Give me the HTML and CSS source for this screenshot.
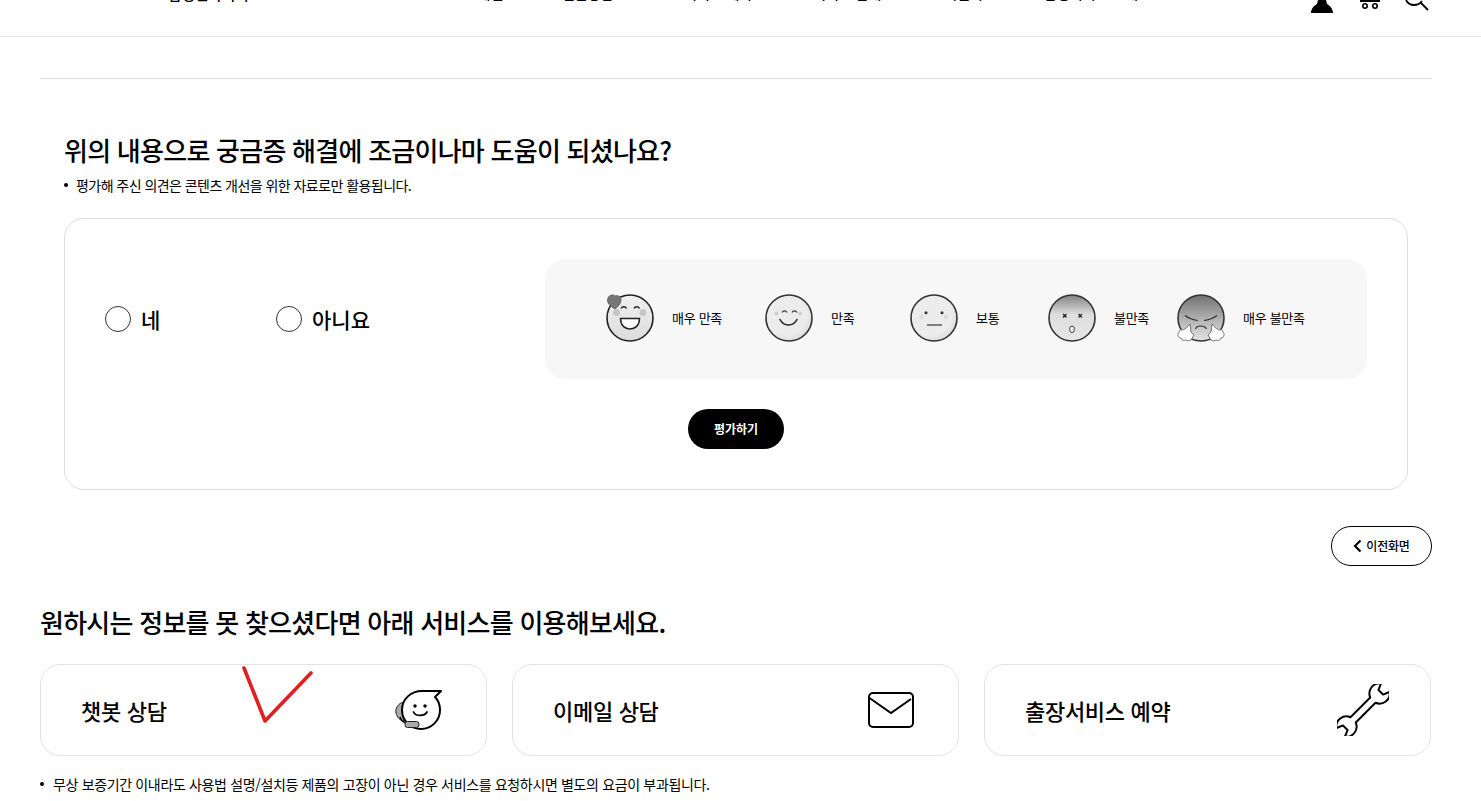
FILE: index.html
```html
<!DOCTYPE html>
<html lang="ko">
<head>
<meta charset="utf-8">
<title>삼성전자서비스</title>
<link rel="stylesheet" href="styles.css">
</head>
<body>
<header class="site-header">
  <div class="brand"><span class="wordmark">SAMSUNG</span><span class="service-name">삼성전자서비스</span></div>
  <nav class="nav">
    <a>스스로 해결</a><a>전문상담</a><a>서비스 예약</a><a>서비스 안내</a><a>고객센터</a><a>삼성서비스 소개</a>
  </nav>
  <div class="header-icons">
    <svg class="hi hi-user" width="22" height="13" viewBox="0 0 22 13"><path d="M0 13c0-5 4-8 6-9L7 0h8l1 4c2 1 6 4 6 9z" fill="#000"/></svg>
    <svg class="hi hi-cart" width="22" height="9" viewBox="0 0 22 9"><path d="M1 1h20" stroke="#000" stroke-width="2"/><circle cx="6" cy="6" r="2.2" fill="none" stroke="#000" stroke-width="1.6"/><circle cx="16" cy="6" r="2.2" fill="none" stroke="#000" stroke-width="1.6"/></svg>
    <svg class="hi hi-search" width="24" height="11" viewBox="0 0 24 11"><path d="M1 0c2 4 5 5 8 5s6-1 8-4M16 3l7 7" fill="none" stroke="#000" stroke-width="1.8"/></svg>
  </div>
</header>

<main class="page">
  <hr class="divider">

  <section class="survey">
    <h2 class="survey-title">위의 내용으로 궁금증 해결에 조금이나마 도움이 되셨나요?</h2>
    <p class="note">평가해 주신 의견은 콘텐츠 개선을 위한 자료로만 활용됩니다.</p>

    <div class="survey-card">
      <div class="survey-row">
        <div class="answers">
          <label class="answer"><span class="radio"></span>네</label>
          <label class="answer"><span class="radio"></span>아니요</label>
        </div>
        <div class="ratings">
          <div class="rating">
            <svg class="face" viewBox="0 0 48 48" width="48" height="48">
              <defs>
                <linearGradient id="g1" x1="0" y1="0" x2="0" y2="1"><stop offset="0" stop-color="#f0f0f0"/><stop offset="1" stop-color="#dcdcdc"/></linearGradient>
              </defs>
              <circle cx="24" cy="24" r="23" fill="url(#g1)" stroke="#222" stroke-width="1.6"/>
              <circle cx="10.500" cy="18.500" r="3.500" fill="#c6c6c6"/><circle cx="37" cy="18.500" r="3.500" fill="#c6c6c6"/>
              <path d="M15 14.500a3 3 0 0 1 5.500 0M28 14.500a3 3 0 0 1 5.500 0" fill="none" stroke="#222" stroke-width="1.500"/>
              <path d="M14.500 24.500h19c0 7-4.500 10.500-9.500 10.500s-9.500-3.500-9.500-10.500z" fill="#fff" stroke="#222" stroke-width="1.500"/>
              <path d="M9 15C4 12 0 8 2 4c1-3 5-4 7-2 2-1 6 0 6 4 0 3-3 7-6 9z" fill="#777" stroke="#555" stroke-width=".8"/>
            </svg>
            <span class="rating-label">매우 만족</span>
          </div>
          <div class="rating">
            <svg class="face" viewBox="0 0 48 48" width="48" height="48">
              <defs>
                <radialGradient id="g2" cx=".42" cy=".42" r=".65"><stop offset=".7" stop-color="#ececec"/><stop offset="1" stop-color="#d8d8d8"/></radialGradient>
              </defs>
              <circle cx="24" cy="24" r="23" fill="url(#g2)" stroke="#333" stroke-width="1.600"/>
              <circle cx="11.500" cy="19.500" r="2" fill="#cdcdcd"/><circle cx="35" cy="19.500" r="2" fill="#cdcdcd"/>
              <path d="M17 18.500a2.800 2.800 0 0 1 5 0M27 18.500a2.800 2.800 0 0 1 5 0" fill="none" stroke="#333" stroke-width="1.200"/>
              <path d="M15 25.500c2 4 5.500 5.500 8.500 5.500s6.500-1.500 8.500-5.500" fill="none" stroke="#222" stroke-width="1.600" stroke-linecap="round"/>
            </svg>
            <span class="rating-label">만족</span>
          </div>
          <div class="rating">
            <svg class="face" viewBox="0 0 48 48" width="48" height="48">
              <circle cx="24" cy="24" r="23" fill="url(#g2)" stroke="#333" stroke-width="1.600"/>
              <circle cx="11.500" cy="23" r="2.200" fill="#dcdcdc"/><circle cx="36" cy="23" r="2.200" fill="#dcdcdc"/>
              <circle cx="16" cy="18.700" r="1.500" fill="#333"/><circle cx="32" cy="18.700" r="1.500" fill="#333"/>
              <path d="M17 31h15" stroke="#333" stroke-width="1.200"/>
            </svg>
            <span class="rating-label">보통</span>
          </div>
          <div class="rating">
            <svg class="face" viewBox="0 0 48 48" width="48" height="48">
              <defs>
                <linearGradient id="g4" x1="0" y1="0" x2="0" y2="1"><stop offset="0" stop-color="#828282"/><stop offset=".42" stop-color="#dedede"/><stop offset="1" stop-color="#e6e6e6"/></linearGradient>
              </defs>
              <circle cx="24" cy="24" r="23" fill="url(#g4)" stroke="#333" stroke-width="1.600"/>
              <path d="M15 20l3.500 3.500M18.500 20L15 23.500M30.500 20l3.500 3.500M34 20l-3.500 3.500" stroke="#222" stroke-width="1.300"/>
              <ellipse cx="24" cy="35.300" rx="2.300" ry="3.300" fill="#fff" stroke="#333" stroke-width="1"/>
            </svg>
            <span class="rating-label">불만족</span>
          </div>
          <div class="rating">
            <svg class="face" viewBox="0 0 48 48" width="48" height="48">
              <defs>
                <linearGradient id="g5" x1="0" y1="0" x2="0" y2="1"><stop offset="0" stop-color="#727272"/><stop offset=".55" stop-color="#b4b4b4"/><stop offset="1" stop-color="#e4e4e4"/></linearGradient>
              </defs>
              <circle cx="24" cy="24" r="23" fill="url(#g5)" stroke="#333" stroke-width="1.600"/>
              <path d="M8 21.500c4 3 9 4.500 13 5M40 21.500c-4 3-9 4.500-13 5" fill="none" stroke="#333" stroke-width="1.200"/>
              <path d="M18.500 35c1-4 9-4 11 0" fill="none" stroke="#333" stroke-width="1.200"/>
              <path d="M13 30l1 8 3 3-3 5c-2 1-4 1-5 0-2 1-5 0-5-2-3 0-4-4-2-6 0-2 3-3 4-2 2-1 4-2 7-6z" fill="#fff" stroke="#555" stroke-width=".8"/>
              <path d="M35 30l-1 8-3 3 3 5c2 1 4 1 5 0 2 1 5 0 5-2 3 0 4-4 2-6 0-2-3-3-4-2-2-1-4-2-7-6z" fill="#fff" stroke="#555" stroke-width=".8"/>
            </svg>
            <span class="rating-label">매우 불만족</span>
          </div>
        </div>
      </div>
      <button class="submit" type="button">평가하기</button>
    </div>
  </section>

  <div class="back-row">
    <button class="back" type="button">
      <svg width="9" height="14" viewBox="0 0 9 14"><path d="M7.500 1.500L2 7l5.500 5.500" fill="none" stroke="#000" stroke-width="2.200"/></svg>
      이전화면
    </button>
  </div>

  <h2 class="services-title">원하시는 정보를 못 찾으셨다면 아래 서비스를 이용해보세요.</h2>

  <div class="services">
    <a class="service">
      <span>챗봇 상담</span>
      <svg class="service-icon" width="52" height="46" viewBox="0 0 52 46">
        <path d="M3 26c-1-4 2-10 8-11l0 19c-4 0-7-4-8-8z" fill="#aaa" stroke="#222" stroke-width="1"/>
        <path d="M48 4H29C18 4 9 12 9 23s9 19 19 19 19-8 19-19c0-4-1-9-5-13z" fill="#fff" stroke="#000" stroke-width="2" stroke-linejoin="round"/>
        <circle cx="22" cy="19" r="1.700" fill="#000"/><circle cx="32" cy="19" r="1.700" fill="#000"/>
        <path d="M20.500 25c2 4.500 11 4.500 13.500 0" fill="none" stroke="#000" stroke-width="1.800" stroke-linecap="round"/>
        <path d="M7 30c1 3 3 5 6 6" fill="none" stroke="#000" stroke-width="1.500"/>
        <rect x="12" y="34.500" width="14" height="6" rx="2.500" fill="#aaa" stroke="#222" stroke-width="1"/>
      </svg>
    </a>
    <a class="service">
      <span>이메일 상담</span>
      <svg class="service-icon" width="52" height="46" viewBox="0 0 52 46">
        <rect x="4" y="6" width="44" height="34" rx="4" fill="#fff" stroke="#000" stroke-width="2"/>
        <path d="M4.500 11L26 26l20-14" fill="none" stroke="#000" stroke-width="2"/>
      </svg>
    </a>
    <a class="service">
      <span>출장서비스 예약</span>
      <svg class="service-icon" width="52" height="52" viewBox="-26 -26 52 52">
        <g transform="rotate(-45) scale(.93)">
          <path d="M-15-4H15A11 11 0 0 1 34-6.500L27-3.500V3.500L34 6.500A11 11 0 0 1 15 4H-15A11 11 0 0 1-34 6.500L-27 3.500V-3.500L-34-6.500A11 11 0 0 1-15-4Z" fill="#fff" stroke="#000" stroke-width="2.100" stroke-linejoin="round"/>
        </g>
      </svg>
    </a>
  </div>

  <p class="note note-foot">무상 보증기간 이내라도 사용법 설명/설치등 제품의 고장이 아닌 경우 서비스를 요청하시면 별도의 요금이 부과됩니다.</p>
</main>

<svg class="annotation" width="80" height="62" viewBox="0 0 80 62">
  <path d="M4 3L25 56 71 8" fill="none" stroke="#e02020" stroke-width="3.600" stroke-linecap="round" stroke-linejoin="round"/>
</svg>
</body>
</html>
```

FILE: styles.css
```css
* { box-sizing: border-box; }
html, body { margin: 0; padding: 0; background: #fff; color: #000; }
body {
  font-family: "Noto Sans CJK KR", "Noto Sans", sans-serif;
  height: 801px;
  overflow: hidden;
  position: relative;
}

/* header, scrolled so its upper part is off screen */
.site-header {
  height: 37px;
  border-bottom: 1px solid #e3e3e3;
  overflow: hidden;
  position: relative;
  display: flex;
  align-items: flex-start;
}
.brand {
  margin: -22px 0 0 40px;
  width: 395px;
  display: flex;
  align-items: baseline;
  line-height: 28px;
}
.wordmark {
  font-family: "Liberation Sans", sans-serif;
  font-weight: 700;
  font-size: 23px;
  letter-spacing: 1.300px;
  width: 128px;
}
.service-name { font-size: 15px; font-weight: 500; letter-spacing: -.4px; }
.nav {
  display: grid;
  grid-template-columns: 127px 122px 129px 118px 113px auto;
  margin-top: -17px;
  font-size: 14px;
  font-weight: 500;
  line-height: 20px;
}
.header-icons {
  position: absolute;
  right: 52px;
  top: 0;
  display: flex;
  align-items: flex-start;
}
.hi { display: block; }
.hi-user { margin-right: 26px; }
.hi-cart { margin-right: 24px; }

.page { padding: 0 49px 0 40px; }
.divider {
  margin: 41px 0 0;
  border: 0;
  height: 1px;
  background: #dedede;
}
.survey { padding: 0 24px; }
.survey-title {
  margin: 53px 0 0;
  font-size: 26px;
  font-weight: 500;
  line-height: 36px;
  letter-spacing: -.75px;
}
.note {
  margin: 7px 0 0;
  font-size: 14px;
  line-height: 20px;
  letter-spacing: -.55px;
  display: flex;
  align-items: center;
  gap: 8px;
}
.note::before {
  content: "";
  width: 4px;
  height: 4px;
  border-radius: 50%;
  background: #000;
  flex: none;
}
.survey-card {
  margin-top: 23px;
  height: 272px;
  border: 1px solid #dedede;
  border-radius: 20px;
  padding: 40px;
  display: flex;
  flex-direction: column;
  align-items: center;
}
.survey-row { width: 100%; display: flex; align-items: center; height: 120px; }
.answers { width: 440px; display: grid; grid-template-columns: 171px auto; }
.answer {
  display: flex;
  align-items: center;
  gap: 10px;
  font-size: 21px;
  font-weight: 500;
  line-height: 30px;
}
.radio {
  width: 26px;
  height: 26px;
  border: 1px solid #333;
  border-radius: 50%;
  background: #fff;
}
.ratings {
  width: 822px;
  height: 120px;
  background: #f7f7f7;
  border-radius: 20px;
  padding-left: 61px;
  display: grid;
  grid-template-columns: 159px 145px 138px 129px auto;
  align-items: center;
}
.rating { display: flex; align-items: center; gap: 18px; }
.face { display: block; flex: none; margin-top: -2px; }
.rating-label { font-size: 13px; line-height: 18px; letter-spacing: -.3px; margin-top: -2px; }
.submit {
  margin-top: 30px;
  width: 96px;
  height: 40px;
  border: 0;
  border-radius: 20px;
  background: #000;
  color: #fff;
  font: 700 12px/1 "Noto Sans CJK KR", sans-serif;
}
.back-row { margin-top: 36px; display: flex; justify-content: flex-end; }
.back {
  width: 101px;
  height: 40px;
  border: 1px solid #000;
  border-radius: 20px;
  background: #fff;
  color: #000;
  font: 500 12px/1 "Noto Sans CJK KR", sans-serif;
  letter-spacing: -.2px;
  display: flex;
  align-items: center;
  justify-content: center;
  gap: 4px;
}
.services-title {
  margin: 38px 0 0;
  font-size: 26px;
  font-weight: 500;
  line-height: 36px;
  letter-spacing: -.75px;
}
.services {
  margin-top: 24px;
  display: grid;
  grid-template-columns: repeat(3, 447px);
  gap: 25px;
}
.service {
  height: 92px;
  border: 1px solid #e3e3e3;
  border-radius: 20px;
  padding: 0 41px 0 40px;
  display: flex;
  align-items: center;
  justify-content: space-between;
  font-size: 22px;
  font-weight: 500;
  letter-spacing: -.3px;
}
.service-icon { display: block; flex: none; }
.note-foot { margin-top: 18px; gap: 9px; letter-spacing: -.35px; }

/* hand-drawn red check mark sitting over the page */
.annotation {
  position: absolute;
  left: 240px;
  top: 665px;
}
```
